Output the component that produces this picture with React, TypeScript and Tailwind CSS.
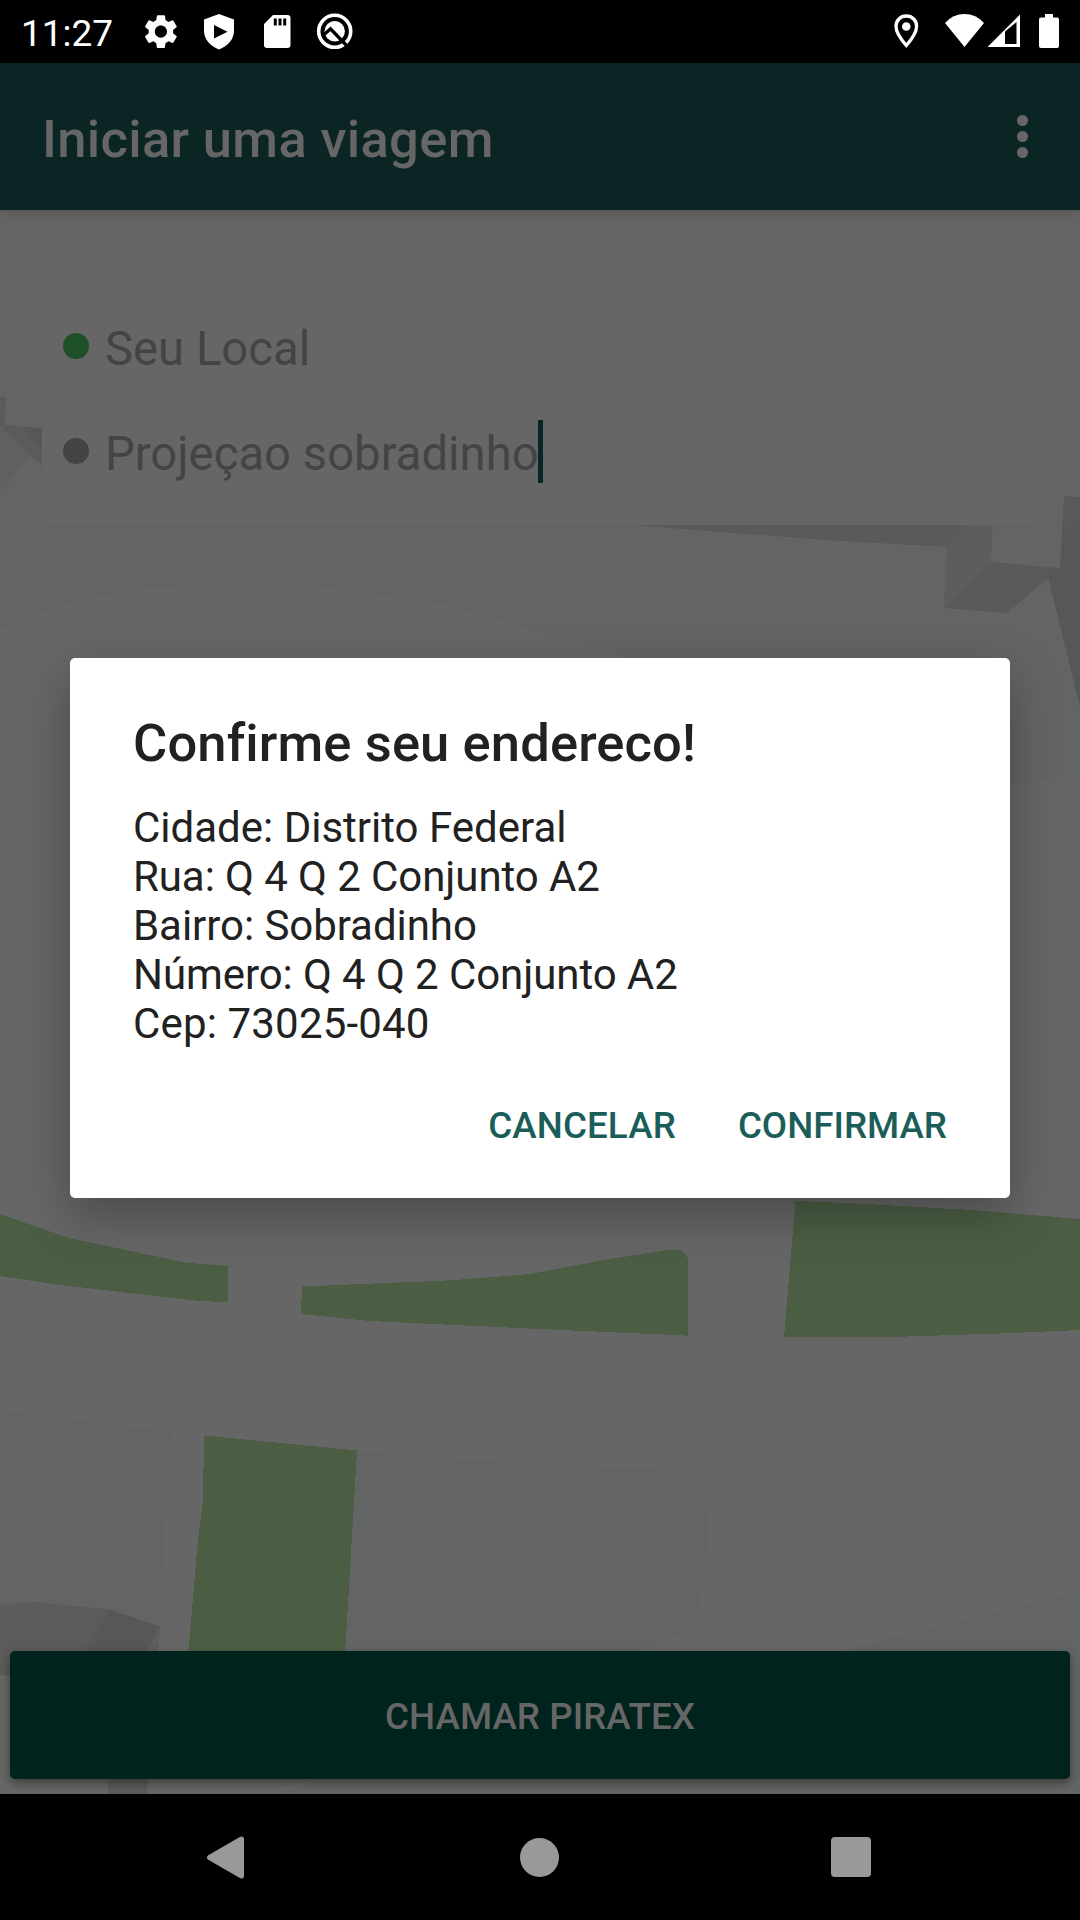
import React from "react";

function MapBackground() {
  return (
    <svg
      className="absolute inset-0 h-full w-full"
      viewBox="0 210 1080 1584"
      preserveAspectRatio="none"
      shapeRendering="crispEdges"
    >
      <rect x="0" y="210" width="1080" height="1584" fill="#666666" />
      <path d="M0 210H1080V580H0Z" fill="#646464" />
      {/* pale blocks */}
      <path
        d="M0 493L31 457L42 465V520H630L946 547L1060 568L1080 600V778L1065 776L1010 788L900 800L800 720L625 657L540 632L490 617L440 604L325 587L300 585H240L160 587L120 592L47 610L0 630Z"
        fill="#626563"
      />
      <path d="M0 631L47 611L120 593L160 588L240 586H300L325 588L440 605L490 618L540 633L625 658V700H0Z" fill="#666666" />
      <path d="M0 1410L171 1432L164 1540L158 1651L0 1660Z" fill="#626563" />
      <path
        d="M357 1451L400 1455L540 1464L612 1467L670 1470H712L707 1550L696 1629L640 1651L345 1660Z"
        fill="#626563"
      />
      <path d="M1080 1590L1000 1611L880 1640L845 1651L322 1780L275 1794H1080Z" fill="#636564" />
      {/* buildings */}
      <path d="M0 426L30 456L0 493Z" fill="#606060" />
      <path d="M0 397H6V414L5 416V425L42 428V465L31 457L0 426Z" fill="#5b5b5b" />
      <path d="M24 427L42 428V450Z" fill="#575757" />
      <path d="M630 525H966L947 547L840 541L720 532Z" fill="#5a5a5a" />
      <path d="M966 525H993L991 562L944 608L946 547Z" fill="#5d5d5d" />
      <path d="M993 520H1063L1060 568L991 562Z" fill="#646464" />
      <path d="M991 562L1060 568L1046 580L1007 613L944 608Z" fill="#5a5a5a" />
      <path d="M1064 496L1080 497V707L1046 568L1060 568Z" fill="#575757" />
      <path d="M1064 496L1080 497V516L1063 534Z" fill="#595959" />
      <path d="M0 1605L30 1601.5L110 1609.5L160 1626.5L158 1656L10 1676L0 1675Z" fill="#5b5b5b" />
      <path d="M0 1605L30 1601.5L0 1637Z" fill="#5d5d5d" />
      <path d="M110 1609.5L160 1626.5L145 1652H83Z" fill="#575757" />
      <path d="M160 1626.5L158 1652H145Z" fill="#5d5d5d" />
      <path d="M109 1770H149L147 1794H108Z" fill="#5b5b5b" />
      {/* green areas */}
      <g fill="#4b5e44">
        <path d="M0 1214L69 1238L186 1262.7L228 1266V1302.5L195 1300.5L60 1285L0 1276Z" />
        <path d="M302 1286.5L350 1284.5L451 1280.3L530 1274L611 1258.7L672 1249.5L681 1250.5L684 1252L688 1259V1335.7L540 1329L370 1321L301 1314Z" />
        <path d="M795.5 1201L848 1203L972 1210L1080 1219V1330L1000 1333.5L907 1336.5L784 1336.8Z" />
        <path d="M205 1435.5L357 1450.5L345 1655H188L198 1540L203 1500L204 1438Z" />
      </g>
    </svg>
  );
}

function StatusBar() {
  return (
    <header className="flex h-[63px] items-center bg-black pl-[21px] pr-[21px] text-white">
      <span className="w-[93px] whitespace-nowrap text-[37px] leading-[63px] pt-[3px]">11:27</span>
      <svg className="ml-[24px] h-[63px] w-[220px]" viewBox="138 0 220 63" fill="#fff">
        <path
          transform="translate(140.5 11.2) scale(1.7)"
          d="M19.14 12.94c.04-.3.06-.61.06-.94 0-.32-.02-.64-.07-.94l2.03-1.58c.18-.14.23-.41.12-.61l-1.92-3.32c-.12-.22-.37-.29-.59-.22l-2.39.96c-.5-.38-1.03-.7-1.62-.94l-.36-2.54c-.04-.24-.24-.41-.48-.41h-3.84c-.24 0-.43.17-.47.41l-.36 2.54c-.59.24-1.13.57-1.62.94l-2.39-.96c-.22-.08-.47 0-.59.22L2.74 8.87c-.12.21-.08.47.12.61l2.03 1.58c-.05.3-.09.63-.09.94s.02.64.07.94l-2.03 1.58c-.18.14-.23.41-.12.61l1.92 3.32c.12.22.37.29.59.22l2.39-.96c.5.38 1.03.7 1.62.94l.36 2.54c.05.24.24.41.48.41h3.84c.24 0 .44-.17.47-.41l.36-2.54c.59-.24 1.13-.56 1.62-.94l2.39.96c.22.08.47 0 .59-.22l1.92-3.32c.12-.22.07-.47-.12-.61l-2.01-1.58zM12 15.6c-1.98 0-3.6-1.62-3.6-3.6s1.62-3.6 3.6-3.6 3.6 1.62 3.6 3.6-1.62 3.6-3.6 3.6z"
        />
        <path fillRule="evenodd" d="M219 14L234 19.500V31C234 39 228 46 219 49.500C210 46 204 39 204 31V19.500ZM214 25V38.500L227.500 31.700Z" />
        <path fillRule="evenodd" d="M273 15H287.500Q290.500 15 290.500 18V45Q290.500 48 287.500 48H267Q264 48 264 45V24ZM273.800 18.500V25.500H276.800V18.500ZM278.500 18.500V25.500H281.500V18.500ZM283.200 18.500V25.500H286.200V18.500Z" />
        <circle cx="334.700" cy="31.300" r="16" fill="none" stroke="#fff" strokeWidth="3.600" />
        <circle cx="334.700" cy="31.300" r="10.200" />
        <path d="M323 35.500L330.500 28.800L349.500 48.500" fill="none" stroke="#000" strokeWidth="3.400" />
      </svg>
      <svg className="ml-auto h-[63px] w-[170px]" viewBox="889 0 170 63" fill="#fff">
        <path d="M906.300 16C900.300 16 896 20.500 896 26.300C896 33 901 39.500 906.300 45.500C911.600 39.500 916.600 33 916.600 26.300C916.600 20.500 912.300 16 906.300 16Z" fill="none" stroke="#fff" strokeWidth="3.300" />
        <circle cx="906.300" cy="26.500" r="4.300" />
        <path d="M945 23Q953 14 964.500 14Q976 14 984 23L964.500 47Z" />
        <path fillRule="evenodd" d="M1020 14.500V47H987.500ZM1005 31.500V44H1016.500V22Z" />
        <path d="M1045 14H1053V17.500H1057Q1059 17.500 1059 19.500V46Q1059 48 1057 48H1041Q1039 48 1039 46V19.500Q1039 17.500 1041 17.500H1045Z" />
      </svg>
    </header>
  );
}

function AppBar() {
  return (
    <div className="relative z-10 flex h-[147px] items-center justify-between bg-[#0b2524] pl-[42px] pr-[52px] shadow-[0_2px_8px_rgba(0,0,0,0.18)]">
      <h1 className="whitespace-nowrap text-[52.5px] font-medium leading-[62px] tracking-[0.33px] text-[#666666] pt-[4px]">
        Iniciar uma viagem
      </h1>
      <div className="flex flex-col gap-[5px]">
        <i className="size-[11px] rounded-full bg-[#666666]" />
        <i className="size-[11px] rounded-full bg-[#666666]" />
        <i className="size-[11px] rounded-full bg-[#666666]" />
      </div>
    </div>
  );
}

function AddressFields() {
  return (
    <section className="relative mx-[42px] mt-[63px] flex h-[252px] flex-col bg-[#666666] pl-[21px] pt-[21px] text-[47.25px] text-[#444444]">
      <div className="flex h-[105px] items-center">
        <i className="mb-[2px] size-[26px] rounded-full bg-[#1e5027]" />
        <span className="ml-4 whitespace-nowrap leading-[55px] pt-[5px]">Seu Local</span>
      </div>
      <div className="flex h-[105px] items-center">
        <i className="mb-[2px] size-[26px] rounded-full bg-[#444444]" />
        <span className="ml-4 whitespace-nowrap leading-[55px] pt-[5px]">Projeçao sobradinho</span>
        <i className="-ml-px h-[63px] w-[5px] bg-[#0b2524]" />
      </div>
    </section>
  );
}

const address = [
  { text: "Cidade: Distrito Federal", tracking: "tracking-normal" },
  { text: "Rua: Q 4 Q 2 Conjunto A2", tracking: "tracking-[-0.08px]" },
  { text: "Bairro: Sobradinho", tracking: "tracking-[-0.05px]" },
  { text: "Número: Q 4 Q 2 Conjunto A2", tracking: "tracking-[-0.08px]" },
  { text: "Cep: 73025-040", tracking: "tracking-[0.16px]" },
];

function ConfirmDialog() {
  return (
    <div
      role="dialog"
      className="absolute left-[70px] top-[658px] z-20 h-[540px] w-[940px] rounded-[5px] bg-white px-[63px] pt-[54px] text-[#212121] shadow-[0_18px_50px_rgba(0,0,0,0.28)]"
    >
      <h2 className="whitespace-nowrap text-[52.5px] font-medium leading-[62px] tracking-[0.12px]">
        Confirme seu endereco!
      </h2>
      <div className="mt-[29px] text-[42px] leading-[49px]">
        {address.map(({ text, tracking }) => (
          <p key={text} className={`whitespace-nowrap ${tracking}`}>{text}</p>
        ))}
      </div>
      <div className="mt-[56px] flex justify-end gap-[62px] text-[36.75px] font-medium leading-[43px] text-[#1b5e59]">
        <button className="tracking-[0.1px]">CANCELAR</button>
        <button>CONFIRMAR</button>
      </div>
    </div>
  );
}

export default function App() {
  return (
    <div className="relative flex h-[1920px] w-[1080px] flex-col overflow-hidden bg-black font-['Roboto',sans-serif]">
      <StatusBar />
      <AppBar />
      <main className="relative flex h-[1584px] flex-col overflow-hidden">
        <MapBackground />
        <AddressFields />
        <button className="relative mx-[10px] mb-[15px] mt-auto h-[128px] rounded-[5px] bg-[#00231d] text-[36.75px] font-medium tracking-[0.05px] text-[#666666] pt-[3px] shadow-[0_4px_10px_rgba(0,0,0,0.4)]">
          CHAMAR PIRATEX
        </button>
      </main>
      <nav className="flex h-[126px] items-center justify-between pl-[206px] pr-[209px]">
        <svg className="h-[43px] w-[39px]" viewBox="0 0 39 43">
          <path d="M3.500 21.500L35.500 3V40Z" fill="#999" stroke="#999" strokeWidth="5" strokeLinejoin="round" />
        </svg>
        <i className="ml-[3px] size-[39px] rounded-full bg-[#999999]" />
        <i className="size-10 rounded-[4px] bg-[#999999]" />
      </nav>
      <ConfirmDialog />
    </div>
  );
}
